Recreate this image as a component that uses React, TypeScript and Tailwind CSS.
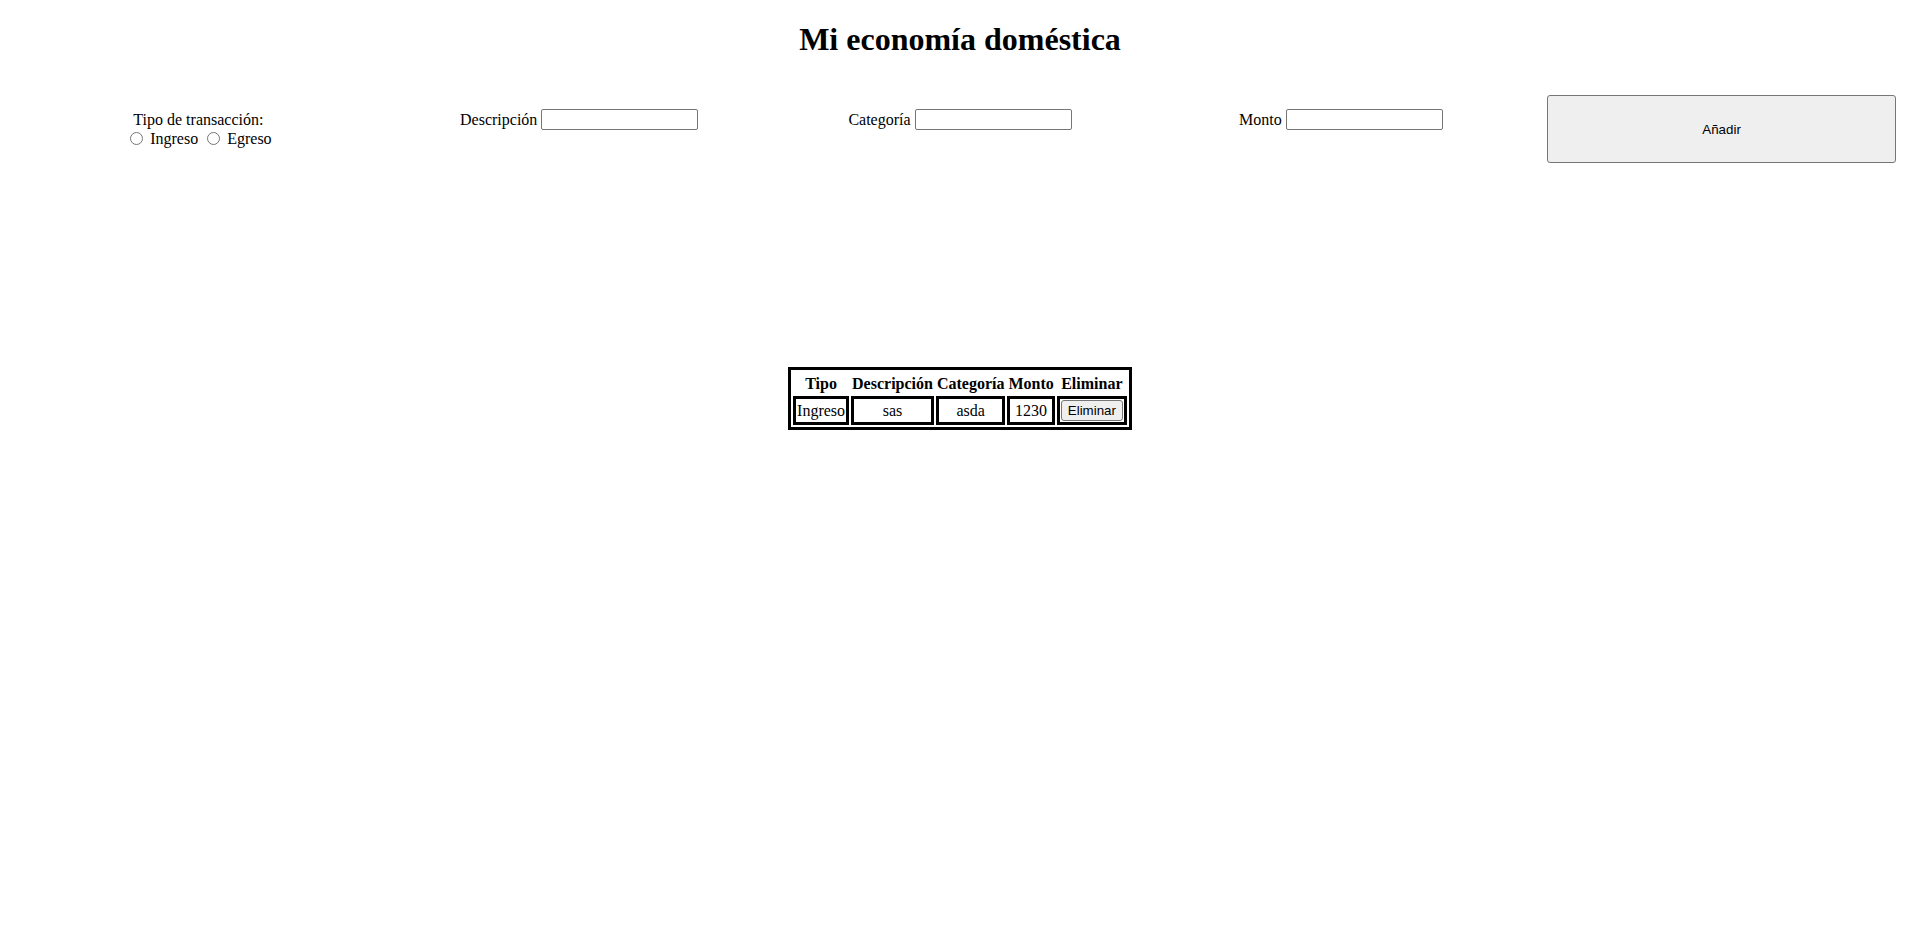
import React from "react";

const serif = { fontFamily: '"Liberation Serif", "Times New Roman", serif' };
const sans = { fontFamily: '"Liberation Sans", Arial, sans-serif' };

function Field({ label }: { label: string }) {
  return (
    <div className="flex-1 pt-[30px] text-center">
      <label className="text-[16px] leading-[21px]">
        {label}{" "}
        <input
          type="text"
          className="w-[157px] h-[21px] border border-[#767676] rounded-[2px] px-[2px] align-top bg-white"
        />
      </label>
    </div>
  );
}

export default function App() {
  return (
    <div className="min-h-[951px] bg-white text-black px-2 leading-[normal]" style={serif}>
      <h1 className="pt-[21px] text-center text-[32px] font-bold leading-[37px]">
        Mi economía doméstica
      </h1>

      {/* Formulario */}
      <div className="mt-[21px] flex items-start">
        <div className="flex-1 pt-[31px] text-center text-[16px] leading-[19px]">
          <div>Tipo de transacción:</div>
          <div>
            <input type="radio" name="tipo" className="w-[13px] h-[13px] ml-[5px] mr-[3px] align-[-1px]" />{" "}
            <span>Ingreso</span>{" "}
            <input type="radio" name="tipo" className="w-[13px] h-[13px] ml-[5px] mr-[3px] align-[-1px]" />{" "}
            <span>Egreso</span>
          </div>
        </div>
        <Field label="Descripción" />
        <Field label="Categoría" />
        <Field label="Monto" />
        <div className="flex-1 pt-[16px] flex justify-center">
          <button
            className="w-[349px] h-[68px] bg-[#efefef] border border-[#767676] rounded-[3px] text-[13.33px]"
            style={sans}
          >
            Añadir
          </button>
        </div>
      </div>

      {/* Tabla */}
      <div className="mt-[204px] flex justify-center">
        <table className="border-separate border-spacing-[2px] border-[3px] border-black text-[16px]">
          <thead>
            <tr>
              <th className="px-[1px] pt-[3px] pb-[1px] font-bold">Tipo</th>
              <th className="px-[1px] pt-[3px] pb-[1px] font-bold">Descripción</th>
              <th className="px-[1px] pt-[3px] pb-[1px] font-bold">Categoría</th>
              <th className="px-[1px] pt-[3px] pb-[1px] font-bold">Monto</th>
              <th className="px-[1px] pt-[3px] pb-[1px] font-bold">Eliminar</th>
            </tr>
          </thead>
          <tbody>
            <tr>
              <td className="px-[1px] py-[2px] border-[3px] border-black text-center">Ingreso</td>
              <td className="px-[1px] py-[2px] border-[3px] border-black text-center">sas</td>
              <td className="px-[1px] py-[2px] border-[3px] border-black text-center">asda</td>
              <td className="px-[1px] py-[2px] border-[3px] border-black text-center">1230</td>
              <td className="px-[1px] py-[1px] border-[3px] border-black text-center">
                <button
                  className="px-[6px] py-[2px] bg-[#efefef] border border-[#767676] rounded-[3px] text-[13.33px] leading-[normal]"
                  style={sans}
                >
                  Eliminar
                </button>
              </td>
            </tr>
          </tbody>
        </table>
      </div>
    </div>
  );
}
